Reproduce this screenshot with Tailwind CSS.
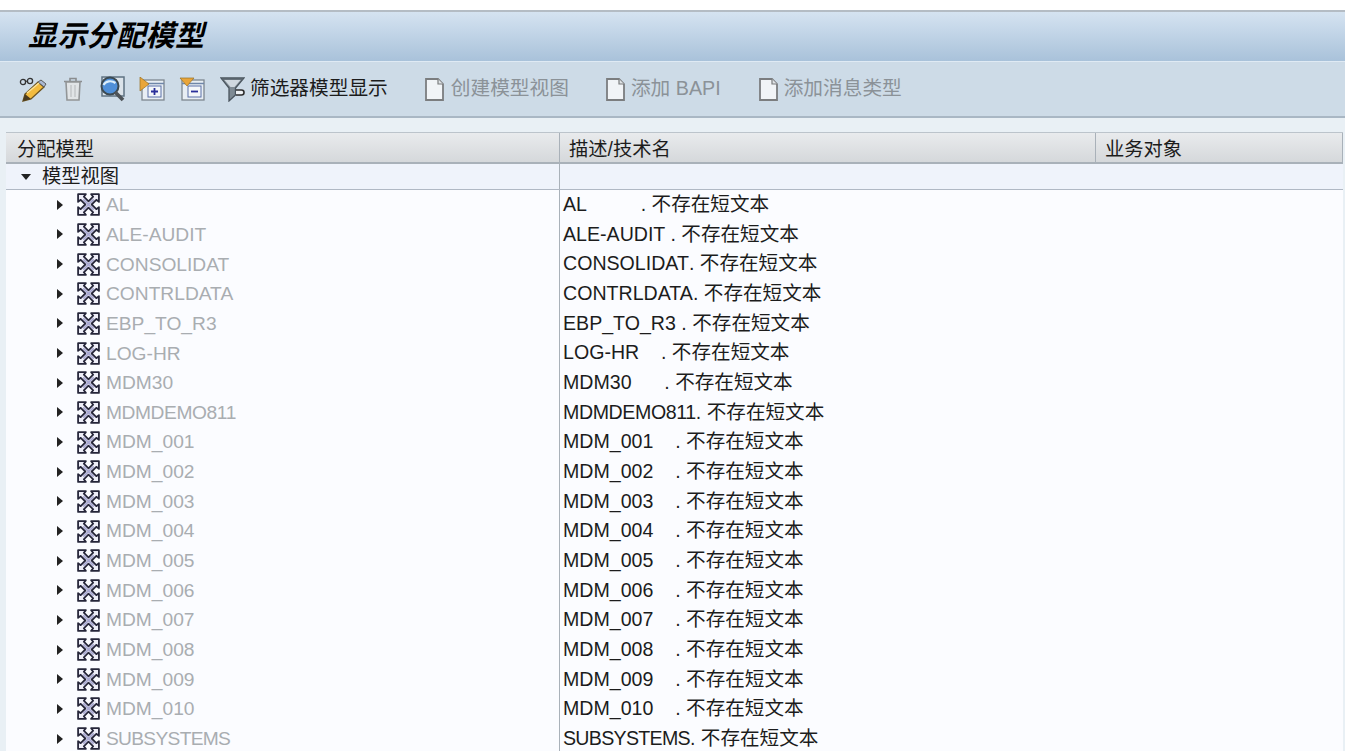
<!DOCTYPE html>
<html lang="zh-CN">
<head>
  <meta charset="UTF-8">
  <title>显示分配模型</title>
  <script src="https://cdn.jsdelivr.net/npm/@tailwindcss/browser@4"></script>
</head>
<body class="bg-white overflow-hidden font-['Liberation_Sans','Noto_Sans_CJK_SC',sans-serif]">
<svg width="0" height="0" class="absolute">
  <symbol id="model" viewBox="0 0 24 24">
    <path d="M2 2h7.500L7.500 4.500 12 9l4.500-4.500L14.500 2H22v7.500l-2.500-2L15 12l4.500 4.500 2.500-2V22h-7.500l2-2.500L12 15l-4.500 4.500 2 2.500H2v-7.500l2.500 2L9 12 4.500 7.500 2 9.500z" fill="#eeeef8" stroke="#26263a" stroke-width="1.700" stroke-linejoin="round"/>
    <path d="M7 7l10 10M17 7L7 17" stroke="#a6a6d0" stroke-width="1.600"/>
  </symbol>
  <symbol id="doc" viewBox="0 0 19 23">
    <path d="M1 1h12l5 5v16H1z" fill="#f1f4f7" stroke="#7b7d7f" stroke-width="1.800"/>
    <path d="M13 1v5h5" fill="#dfe3e6" stroke="#7b7d7f" stroke-width="1.200"/>
  </symbol>
</svg>
<div class="h-[10px] bg-white"></div>
<div class="h-[2px] bg-[#b4bcc4]"></div>
<div class="h-[49px] bg-gradient-to-b from-[#d5e3f1] to-[#a9c2da] flex items-center pl-[28px]">
  <h1 class="text-[29px] leading-none font-bold italic text-black tracking-[0.4px]">显示分配模型</h1>
</div>
<div class="h-[1px] bg-[#dfeaf4]"></div>
<div class="h-[56px] bg-[#cddbe7] border-b-2 border-[#a9b7c4] flex items-center text-[19.7px]">
  <svg width="28" height="26" viewBox="0 0 28 26" class="ml-[19px]">
    <circle cx="4" cy="6" r="2.600" fill="none" stroke="#333" stroke-width="1.300"/>
    <circle cx="11" cy="5" r="2.600" fill="none" stroke="#333" stroke-width="1.300"/>
    <path d="M6.500 5.500l2-.5" stroke="#333" stroke-width="1.200"/>
    <path d="M4 25l2-7L19 6l6 5-13 12z" fill="#f2bb3e" stroke="#6b5320" stroke-width="1.300"/>
    <path d="M19 6l6 5 2-3-5-4z" fill="#a9b8d2" stroke="#5a5a5a"/>
    <path d="M4 25l2-7 6 5z" fill="#4a3b20"/>
    <path d="M8 17L20 7" stroke="#fbe39a" stroke-width="1.500"/>
  </svg>
  <svg width="20" height="24" viewBox="0 0 20 24" class="ml-[16px]">
    <path d="M1 4.500h18M7 4V1.500h6V4" fill="none" stroke="#8a8d8f" stroke-width="1.600"/>
    <path d="M3 5h14l-1 18H4z" fill="#e1e4e6" stroke="#929597" stroke-width="1.600"/>
    <path d="M8 8v12M12 8v12" stroke="#c2c5c7" stroke-width="1.400"/>
  </svg>
  <svg width="26" height="26" viewBox="0 0 26 26" class="ml-[16px]">
    <rect x="3" y="1" width="22" height="19" fill="#dbe3ea" stroke="#5f7383" stroke-width="1.500"/>
    <circle cx="11" cy="10" r="8.500" fill="#4f8fd8" stroke="#3c4a52" stroke-width="2"/>
    <path d="M4.500 9c2-4 8-5 12-2" fill="none" stroke="#dbeefb" stroke-width="2.200"/>
    <path d="M16 16l8 8" stroke="#4d5358" stroke-width="3.800"/>
  </svg>
  <svg width="26" height="24" viewBox="0 0 26 24" class="ml-[14px]">
    <rect x="3" y="3" width="22" height="20" fill="#e8eef4" stroke="#7d8790" stroke-width="1.300"/>
    <path d="M3 6.500h22" stroke="#6f86a8" stroke-width="1.500"/>
    <rect x="9" y="9" width="13" height="11" fill="#f4f7fa" stroke="#5a70a8"/>
    <path d="M15.500 11v7M12 14.500h7" stroke="#2a2f9a" stroke-width="1.800"/>
    <path d="M1 0l9 7-9 7z" fill="#e9a53a" stroke="#9a7020" stroke-width=".7"/>
  </svg>
  <svg width="26" height="24" viewBox="0 0 26 24" class="ml-[14px]">
    <rect x="3" y="3" width="22" height="20" fill="#e8eef4" stroke="#7d8790" stroke-width="1.300"/>
    <path d="M3 6.500h22" stroke="#6f86a8" stroke-width="1.500"/>
    <rect x="9" y="9" width="13" height="11" fill="#f4f7fa" stroke="#5a70a8"/>
    <path d="M12 14.500h7" stroke="#2a2f9a" stroke-width="1.800"/>
    <path d="M1 1h14l-7 8z" fill="#e9a53a" stroke="#9a7020" stroke-width=".7"/>
  </svg>
  <svg width="25" height="25" viewBox="0 0 25 25" class="ml-[15px]">
    <path d="M1 1h23l-8.500 10v7L9 24V11z" fill="#7f8b94" stroke="#4a555e" stroke-width="1.300"/>
    <path d="M4 2.500h17L14.500 10h-4z" fill="#cfd8df"/>
    <path d="M2 2h21" stroke="#59646d" stroke-width="1.600"/>
    <path d="M16 13h5.500a2.500 2.500 0 010 5H16" fill="#eef2f5" stroke="#2e2e2e" stroke-width="1.600"/>
  </svg>
  <span class="ml-[5px] text-[#1c1c1c]">筛选器模型显示</span>
  <svg width="19" height="23" class="ml-[37px]"><use href="#doc"/></svg>
  <span class="ml-[7px] text-[#8b9298]">创建模型视图</span>
  <svg width="19" height="23" class="ml-[37px]"><use href="#doc"/></svg>
  <span class="ml-[6px] text-[#8b9298]">添加 BAPI</span>
  <svg width="19" height="23" class="ml-[38px]"><use href="#doc"/></svg>
  <span class="ml-[6px] text-[#8b9298]">添加消息类型</span>
</div>
<div class="bg-[#e9f0f5] pt-[14px] pl-[6px] pr-[2px] h-[633px] overflow-hidden">
  <div class="flex h-[32px] pt-[4px] border-t border-[#bcc4cb] border-b-2 border-b-[#a9b1b9] bg-gradient-to-b from-[#e9ebed] to-[#d5d8db] text-[19.300px] text-[#1c1c1c] leading-none">
    <div class="w-[554px] -mt-[4px] flex items-center pt-[4px] pl-[11px] border-r border-[#a9b1b9]">分配模型</div>
    <div class="w-[536px] -mt-[4px] flex items-center pt-[4px] pl-[9px] border-r border-[#a9b1b9]">描述/技术名</div>
    <div class="flex-1 -mt-[4px] flex items-center pt-[4px] pl-[9px] border-r border-[#a9b1b9]">业务对象</div>
  </div>
  <div class="flex h-[26px] bg-[#eff3fb] border-b border-[#b0b8c4] text-[19.300px] text-[#1c1c1c] leading-none">
    <div class="w-[554px] flex items-center pl-[15px] gap-[11px] border-r border-[#a9b1b9]">
      <svg width="10" height="6" viewBox="0 0 10 6"><path d="M0 0h10L5 6z" fill="#222"/></svg>
      <span>模型视图</span>
    </div>
  </div>
  <div id="rows" class="bg-[#fbfcff] leading-none"></div>
</div>
<script>
  const models = [
    ["AL", "AL          ", ""],
    ["ALE-AUDIT", "ALE-AUDIT ", ""],
    ["CONSOLIDAT", "CONSOLIDAT", ""],
    ["CONTRLDATA", "CONTRLDATA", ""],
    ["EBP_TO_R3", "EBP_TO_R3 ", ""],
    ["LOG-HR", "LOG-HR    ", ""],
    ["MDM30", "MDM30      ", ""],
    ["MDMDEMO811", "MDMDEMO811", "tracking-[-0.4px]"],
    ["MDM_001", "MDM_001    ", ""],
    ["MDM_002", "MDM_002    ", ""],
    ["MDM_003", "MDM_003    ", ""],
    ["MDM_004", "MDM_004    ", ""],
    ["MDM_005", "MDM_005    ", ""],
    ["MDM_006", "MDM_006    ", ""],
    ["MDM_007", "MDM_007    ", ""],
    ["MDM_008", "MDM_008    ", ""],
    ["MDM_009", "MDM_009    ", ""],
    ["MDM_010", "MDM_010    ", ""],
    ["SUBSYSTEMS", "SUBSYSTEMS", "tracking-[-0.7px]"],
  ];

  let rows = "";
  for (const [name, padded, tracking] of models) {
    rows += `<div class="flex h-[29.67px]">
      <div class="w-[554px] flex items-center pl-[51px] border-r border-[#a9b1b9]">
        <svg width="6" height="10" viewBox="0 0 6 10"><path d="M0 0l6 5-6 5z" fill="#222"/></svg>
        <svg width="25" height="25" class="ml-[13px]"><use href="#model"/></svg>
        <span class="ml-[5px] text-[19.200px] text-[#a9adb1] ${tracking}">${name}</span>
      </div>
      <div class="flex-1 flex items-center pl-[3px] whitespace-pre text-[19.600px] text-[#1c1c1c]"><span class="${tracking}">${padded}</span>. 不存在短文本</div>
    </div>`;
  }
  document.getElementById("rows").innerHTML = rows;
</script>
</body>
</html>
